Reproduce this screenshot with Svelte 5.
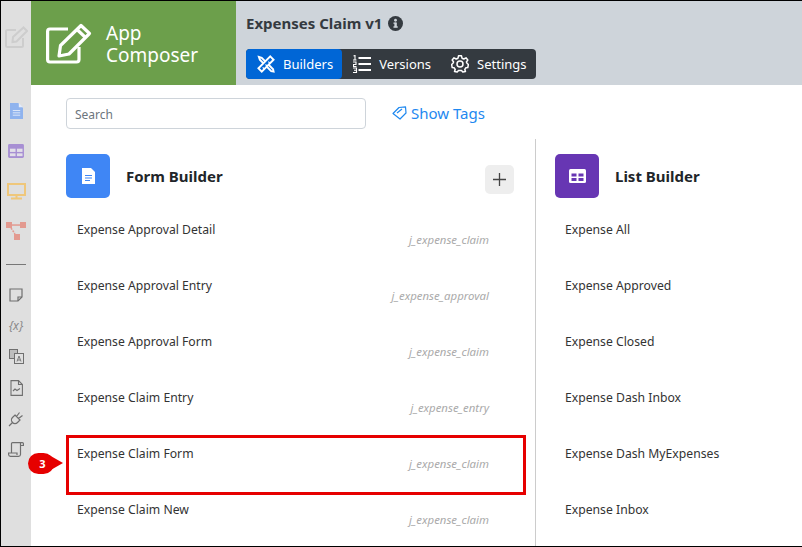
<script>
  const formRows = [
    { name: "Expense Approval Detail", table: "j_expense_claim" },
    { name: "Expense Approval Entry", table: "j_expense_approval" },
    { name: "Expense Approval Form", table: "j_expense_claim" },
    { name: "Expense Claim Entry", table: "j_expense_entry" },
    { name: "Expense Claim Form", table: "j_expense_claim", marked: true },
    { name: "Expense Claim New", table: "j_expense_claim" }
  ];
  const listRows = [
    "Expense All",
    "Expense Approved",
    "Expense Closed",
    "Expense Dash Inbox",
    "Expense Dash MyExpenses",
    "Expense Inbox"
  ];
</script>

<div class="frame">
  <aside class="rail">
    <svg class="rail-top" width="24" height="24" viewBox="0 0 24 24" fill="none" stroke="#cdcdcd" stroke-width="2">
      <path d="M12 5H3.500A1.500 1.500 0 0 0 2 6.500V20.500A1.500 1.500 0 0 0 3.500 22H17.500A1.500 1.500 0 0 0 19 20.500V13" />
      <path d="M9 12 19.500 2.500 23 6 12.500 16.500 8.500 17Z" />
    </svg>
    <div class="rail-group">
      <svg width="13" height="16" viewBox="0 0 14 17"><path d="M0 0H9L14 5V17H0Z" fill="#8fb3ee" /><path d="M9.500 0 14 4.500H9.500Z" fill="#e4ecfa" /><path d="M3 8H11M3 10.500H11M3 13H11" stroke="#e4ecfa" /></svg>
      <svg width="16" height="14" viewBox="0 0 17 15"><rect width="17" height="15" rx="1.500" fill="#a78fd3" /><rect x="2" y="5" width="6" height="3.500" fill="#e2dfe8" /><rect x="9.500" y="5" width="6" height="3.500" fill="#e2dfe8" /><rect x="2" y="10" width="6" height="3" fill="#e2dfe8" /><rect x="9.500" y="10" width="6" height="3" fill="#e2dfe8" /></svg>
      <svg width="19" height="17" viewBox="0 0 19 17" fill="none" stroke="#efc77b" stroke-width="2"><rect x="1" y="1" width="17" height="11" /><path d="M9.500 12V15M4 15.500H15" /></svg>
      <svg width="20" height="18" viewBox="0 0 20 18" fill="#e39a90"><rect width="6" height="6" /><rect x="14" width="6" height="6" /><rect x="8" y="12" width="6" height="6" /><path d="M5 2.300H15V3.800H5Z" /><path d="M5 6 9 12" stroke="#e39a90" stroke-width="1.500" stroke-dasharray="2 1" /></svg>
    </div>
    <div class="rail-line"></div>
    <div class="rail-group small">
      <svg width="14" height="14" viewBox="0 0 14 14" fill="none" stroke="#6f6f6f" stroke-width="1.200"><path d="M1 1H13V9L9 13H1Z" /><path d="M13 9H9V13" /></svg>
      <span class="var">&#123;x&#125;</span>
      <svg width="15" height="15" viewBox="0 0 15 15" fill="none" stroke="#6f6f6f"><rect x="0.500" y="0.500" width="8" height="9" fill="#bdbdbd" /><rect x="5.500" y="4.500" width="9" height="10" fill="#dfdfdf" /><path d="M8 12.500 10 7 12 12.500M8.800 11H11.200" stroke-width="0.900" /></svg>
      <svg width="13" height="16" viewBox="0 0 13 16" fill="none" stroke="#6f6f6f" stroke-width="1.100"><path d="M1 .6H8.500L12.400 4.500V15.400H1Z" /><path d="M8.500 .6V4.500H12.400M3 11 5 9 7 10.500 10 8.500" /></svg>
      <svg width="16" height="16" viewBox="0 0 16 16" fill="none" stroke="#6f6f6f" stroke-width="1.200"><path d="M1 15 5 11M7 4 12 9 9.500 11.500A3 3 0 0 1 4.500 6.500ZM8.500 5.500 11.500 1.500M10.500 7.500 14.500 4.500" /></svg>
      <svg width="16" height="15" viewBox="0 0 16 15" fill="none" stroke="#6f6f6f" stroke-width="1.200"><path d="M3.500 11V1.600A1 1 0 0 1 4.500 .6H14.400A1 1 0 0 1 15.400 1.600V3.500H12.500M12.500 1V12.500A2 2 0 0 1 10.500 14.400H2.500A2 2 0 0 1 .6 12.500V11H9V13" /></svg>
    </div>
  </aside>

  <div class="main">
    <header class="topbar">
      <div class="brand">
        <svg width="46" height="41" viewBox="0 0 46 41" fill="none" stroke="#fff" stroke-width="3.200">
          <path d="M22 6H4A2.500 2.500 0 0 0 1.600 8.500V36.500A2.500 2.500 0 0 0 4 39H30.500A2.500 2.500 0 0 0 33 36.500V24" stroke-linejoin="round" />
          <path d="M14.500 22.500 35 2.500 43.500 10.500 23 31 13 33Z" stroke-linejoin="round" />
          <path d="M31 6.500 39.500 14.500" />
        </svg>
        <div class="brand-text">App<br />Composer</div>
      </div>
      <div class="app-info">
        <div class="app-title">
          <span>Expenses Claim v1</span>
          <svg width="15" height="15" viewBox="0 0 16 16"><circle cx="8" cy="8" r="8" fill="#343a40" /><rect x="6.800" y="7" width="2.600" height="5" fill="#ced4da" /><rect x="5.800" y="11" width="4.600" height="1.500" fill="#ced4da" /><rect x="5.800" y="7" width="3" height="1.300" fill="#ced4da" /><circle cx="8" cy="4.500" r="1.500" fill="#ced4da" /></svg>
        </div>
        <nav class="tabs">
          <button class="tab active">
            <svg width="18" height="18" viewBox="0 0 19 19" fill="none" stroke="#fff" stroke-width="2"><path d="M2 2 5 3 17 15 17.500 17.500 15 17 3 5Z" /><path d="M14 1.500 17.500 5 5 17.500 1.500 14Z" fill="#0066d6" /><path d="M6 13 7.500 14.500M9 10 10.500 11.500M12 7 13.500 8.500" stroke-width="1.200" /></svg>
            Builders
          </button>
          <button class="tab">
            <svg width="18" height="18" viewBox="0 0 18 18" fill="none" stroke="#fff"><path d="M5.500 3H18M5.500 9H18M5.500 15H18" stroke-width="1.800" /><path d="M0.500 1 2 .5V5M0 5H3.500M0 7H3V9.500H.5V11.500H3.500M0 13H3.500V17.500H0M1 15.200H3.500" stroke-width="1.100" /></svg>
            Versions
          </button>
          <button class="tab">
            <svg width="18" height="18" viewBox="0 0 18 18" fill="none" stroke="#fff" stroke-width="1.500"><circle cx="9" cy="9" r="3" /><path d="M7.500 .8H10.500L11 3.200 12.800 4 15 2.800 16.800 5 15.400 7 16 8.200 17.400 9.500 16.800 12.500 14.800 12.800 13.800 14.500 14.500 16.500 11.800 17 10.500 15.500H7.500L6.200 17 3.500 16.500 4.200 14.500 3.200 12.800 1.200 12.500.6 9.500 2 8.200 2.600 7 1.200 5 3 2.800 5.200 4 7 3.200Z" stroke-linejoin="round" /></svg>
            Settings
          </button>
        </nav>
      </div>
    </header>

    <div class="toolbar">
      <input class="search" type="text" placeholder="Search" />
      <span class="tags">
        <svg width="15" height="14" viewBox="0 0 15 14" fill="none" stroke="#1e88f0" stroke-width="1.200"><path d="M1 7.500 7 1.500 13.500.8 14 7 8 13Z" stroke-linejoin="round" /><path d="M5 7 10 3" /></svg>
        Show Tags
      </span>
    </div>

    <div class="builders">
      <section class="col form-col">
        <div class="col-head">
          <div class="col-icon blue">
            <svg width="13" height="16" viewBox="0 0 13 16"><path d="M0 0H9L13 4V16H0Z" fill="#fff" /><path d="M3 7.500H10M3 10H10M3 12.500H8" stroke="#3f86f5" stroke-width="1.100" /></svg>
          </div>
          <h2>Form Builder</h2>
          <button class="add" aria-label="Add">
            <svg width="15" height="15" viewBox="0 0 15 15" stroke="#444" stroke-width="1.300"><path d="M7.500 1V14M1 7.500H14" /></svg>
          </button>
        </div>
        {#each formRows as row}
          <div class="row">
            <span class="name">{row.name}</span>
            <span class="table">{row.table}</span>
            {#if row.marked}
              <span class="mark"></span>
              <span class="callout">3</span>
            {/if}
          </div>
        {/each}
      </section>

      <section class="col list-col">
        <div class="col-head">
          <div class="col-icon purple">
            <svg width="17" height="14" viewBox="0 0 17 14"><rect width="17" height="14" rx="1.500" fill="#fff" /><rect x="2.500" y="4.500" width="5" height="3" fill="#6736b3" /><rect x="9.500" y="4.500" width="5" height="3" fill="#6736b3" /><rect x="2.500" y="9" width="5" height="3" fill="#6736b3" /><rect x="9.500" y="9" width="5" height="3" fill="#6736b3" /></svg>
          </div>
          <h2>List Builder</h2>
        </div>
        {#each listRows as name}
          <div class="row"><span class="name">{name}</span></div>
        {/each}
      </section>
    </div>
  </div>
</div>

<style>
  :global(body) {
    margin: 0;
    background: #fff;
  }

  .frame {
    width: 802px;
    height: 547px;
    box-sizing: border-box;
    border-top: 1px solid #000;
    border-left: 1px solid #000;
    border-bottom: 1px solid #000;
    display: flex;
    overflow: hidden;
    font-family: "Noto Sans", "Open Sans", sans-serif;
    color: #212529;
  }

  .rail {
    width: 30px;
    flex: none;
    background: #dfdfdf;
    display: flex;
    flex-direction: column;
    align-items: center;
  }

  .rail-top {
    margin-top: 24px;
  }

  .rail-group {
    margin-top: 42px;
    display: grid;
    grid-auto-rows: 40px;
    align-items: center;
    justify-items: center;
  }

  .rail-line {
    width: 20px;
    height: 1px;
    background: #777;
    margin-top: 13px;
  }

  .rail-group.small {
    margin-top: 14px;
    grid-auto-rows: 31px;
  }

  .var {
    font-size: 12px;
    font-style: italic;
    color: #8a8a8a;
    line-height: 14px;
  }

  .main {
    flex: 1;
    min-width: 0;
    display: flex;
    flex-direction: column;
  }

  .topbar {
    height: 84px;
    flex: none;
    background: #ced4da;
    display: flex;
  }

  .brand {
    width: 205px;
    background: #6c9f4b;
    color: #fff;
    display: flex;
    align-items: center;
    gap: 14px;
    padding-left: 15px;
    box-sizing: border-box;
  }

  .brand-text {
    font-size: 19px;
    line-height: 22px;
    margin-top: 1px;
  }

  .app-info {
    padding: 12px 0 0 10px;
  }

  .app-title {
    display: flex;
    align-items: center;
    gap: 6px;
    font-size: 15px;
    font-weight: 700;
    color: #343a40;
    line-height: 20px;
    height: 20px;
  }

  .tabs {
    display: flex;
    width: fit-content;
    margin-top: 16px;
    background: #343a40;
    border-radius: 4px;
    height: 30px;
  }

  .tab {
    display: flex;
    align-items: center;
    gap: 8px;
    border: 0;
    background: none;
    color: #fff;
    font: inherit;
    font-size: 13px;
    padding: 0 9px 0 11px;
    border-radius: 4px;
  }

  .tab.active {
    background: #0066d6;
  }

  .toolbar {
    display: flex;
    align-items: center;
    height: 54px;
    flex: none;
    box-sizing: border-box;
    padding: 3px 0 0 35px;
    gap: 26px;
  }

  .search {
    width: 300px;
    height: 31px;
    box-sizing: border-box;
    border: 1px solid #ced4da;
    border-radius: 4px;
    padding: 1px 8px 0;
    font: inherit;
    font-size: 12px;
  }

  .search::placeholder {
    color: #6c757d;
    opacity: 1;
  }

  .tags {
    display: flex;
    align-items: center;
    gap: 4px;
    color: #1e88f0;
    font-size: 15px;
    margin-top: -1px;
  }

  .builders {
    display: flex;
    flex: 1;
    min-height: 0;
  }

  .col-head {
    display: flex;
    align-items: center;
    height: 44px;
    margin-bottom: 22px;
  }

  .form-col {
    width: 505px;
    flex: none;
    box-sizing: border-box;
    padding: 15px 21px 0 35px;
    border-right: 1px solid #ccc;
  }

  .list-col {
    flex: 1;
    padding: 15px 0 0 19px;
  }

  .list-col .row {
    padding-left: 10px;
  }

  .col-icon {
    width: 44px;
    height: 44px;
    border-radius: 5px;
    display: flex;
    align-items: center;
    justify-content: center;
    flex: none;
  }

  .blue {
    background: #3f86f5;
  }

  .purple {
    background: #6736b3;
  }

  h2 {
    margin: 0 0 0 16px;
    font-size: 15px;
    font-weight: 700;
    color: #212529;
  }

  .add {
    margin: 6px 0 0 auto;
    width: 29px;
    height: 29px;
    border: 0;
    border-radius: 5px;
    background: #eee;
    padding: 0;
    display: flex;
    align-items: center;
    justify-content: center;
  }

  .row {
    position: relative;
    height: 56px;
    box-sizing: border-box;
    padding: 0 25px 0 11px;
    font-size: 12.2px;
    display: flex;
    justify-content: space-between;
  }

  .name {
    line-height: 20px;
    color: #333;
  }

  .table {
    margin-top: 12px;
    line-height: 16px;
    font-size: 11.4px;
    font-style: italic;
    color: #aaa;
  }

  .mark {
    position: absolute;
    left: 0;
    right: -12px;
    top: -9px;
    height: 60px;
    box-sizing: border-box;
    border: 3px solid #e60000;
  }

  .callout {
    position: absolute;
    left: -38px;
    top: 9px;
    width: 26px;
    height: 21px;
    border-radius: 11px;
    background: #e60000;
    color: #fff;
    font-size: 11px;
    font-weight: 700;
    line-height: 21px;
    text-align: center;
    text-indent: 3px;
  }

  .callout::after {
    content: "";
    position: absolute;
    right: -9px;
    top: 2px;
    border-left: 14px solid #e60000;
    border-top: 8px solid transparent;
    border-bottom: 8px solid transparent;
  }
</style>
